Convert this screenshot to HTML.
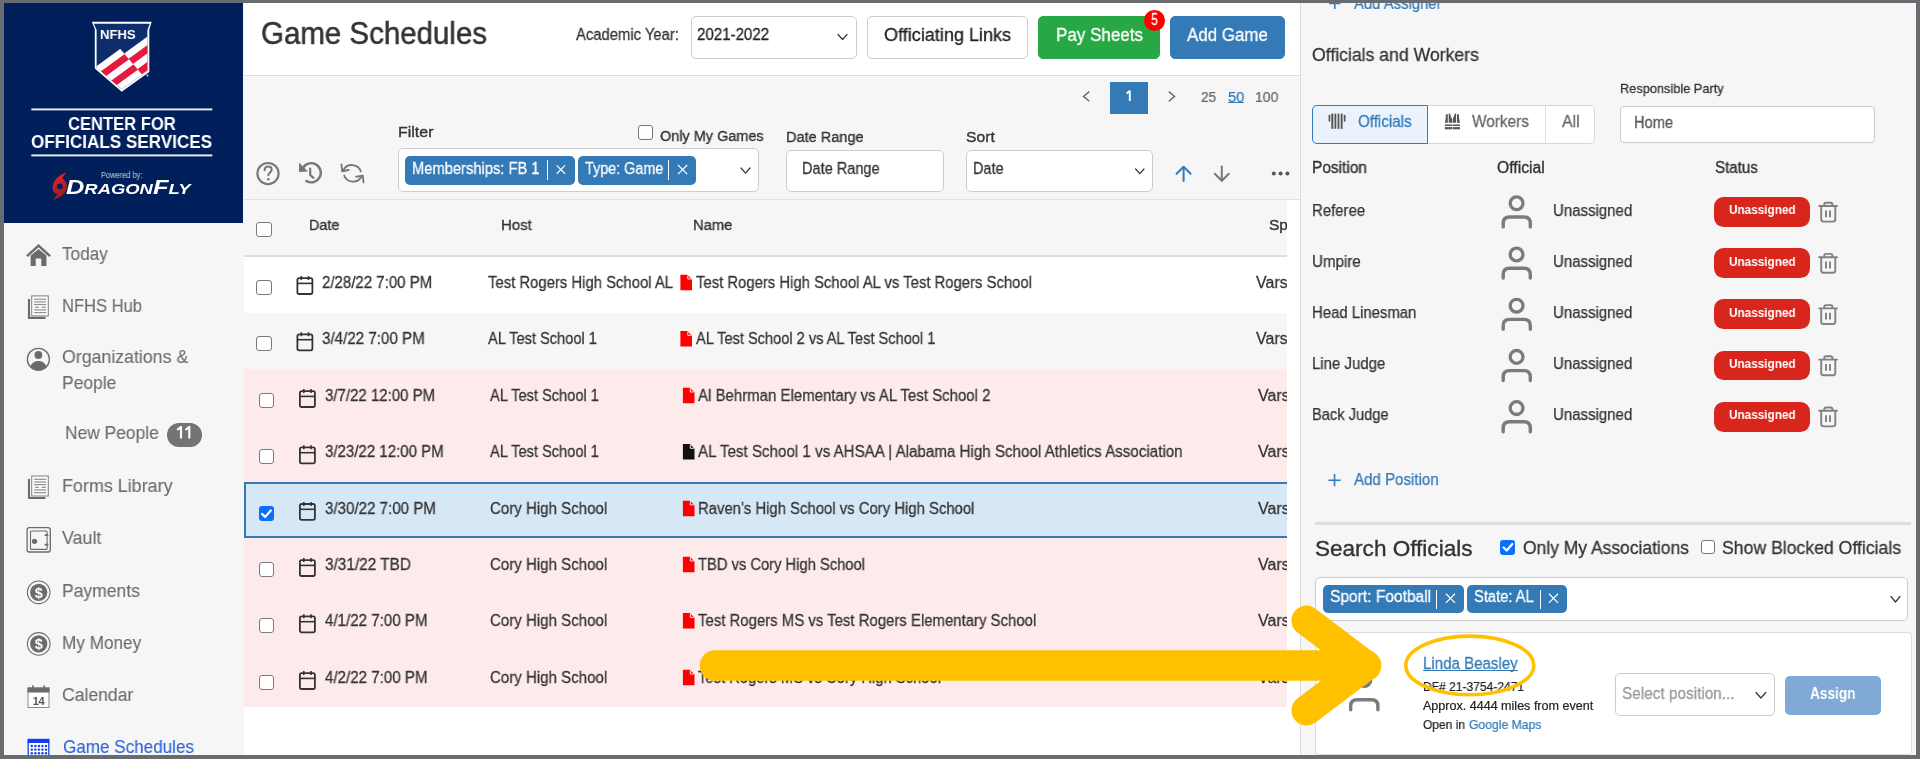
<!DOCTYPE html><html><head><meta charset="utf-8"><style>
*{box-sizing:border-box;margin:0;padding:0}
html,body{width:1920px;height:760px;overflow:hidden;background:#fff}
body{position:relative;font-family:"Liberation Sans",sans-serif;color:#333}
.t{position:absolute;white-space:nowrap;line-height:1;will-change:transform}
.a{position:absolute}
svg{position:absolute;overflow:visible}
</style></head><body>
<div class="a" style="left:0;top:0;width:1920px;height:760px;background:#fff"></div>
<div class="a" style="left:4px;top:3px;width:240px;height:752px;background:#f6f6f6"></div>
<div class="a" style="left:4px;top:3px;width:239px;height:219.5px;background:#001f5b"></div>
<div class="a" style="left:244px;top:3px;width:1056px;height:72px;background:#fff"></div>
<div class="a" style="left:244px;top:75px;width:1056px;height:125px;background:#f6f6f6;border-top:1px solid #ddd"></div>
<div class="a" style="left:244px;top:199px;width:1043px;height:58px;background:#f6f6f6;border-top:1px solid #e3e3e3;border-bottom:2px solid #ddd"></div>
<div class="a" style="left:1287px;top:200px;width:13px;height:555px;background:#fff"></div>
<div class="a" style="left:1300px;top:3px;width:616px;height:752px;background:#f6f6f6;border-left:1px solid #ddd"></div>
<svg width="1920" height="760" style="left:0;top:0">
<defs>
<clipPath id="shin"><path d="M93.8,23.8 L149.8,23.8 L147.4,30 L147.4,71.2 L121.7,89.3 L96.6,67.4 L96.6,30 Z"/></clipPath>
<clipPath id="gL"><path d="M119.9,48.4 L142.2,74.5 L160,95 L60,95 L60,0 L80,0 Z"/></clipPath>
<clipPath id="gR"><path d="M119.9,48.4 L142.2,74.5 L160,95 L170,95 L170,0 L80,0 Z"/></clipPath>
</defs>
<path d="M91.8,21.8 L151.7,21.8 L149.3,29.5 L149.3,72 L121.7,91.8 L94.8,68.5 L94.8,29 Z" fill="#fff"/>
<path d="M93.8,23.8 L149.8,23.8 L147.4,30 L147.4,71.2 L121.7,89.3 L96.6,67.4 L96.6,30 Z" fill="#0d2d6c"/>
<g clip-path="url(#shin)">
 <g clip-path="url(#gL)"><g transform="rotate(-36)">
  <rect x="-300" y="110.2" width="600" height="60" fill="#fff"/>
  <rect x="-300" y="117" width="600" height="6.8" fill="#e31b3f"/>
  <rect x="-300" y="130.6" width="600" height="6.8" fill="#e31b3f"/>
 </g></g>
 <g clip-path="url(#gR)"><g transform="rotate(-36)">
  <rect x="-300" y="116.3" width="600" height="60" fill="#fff"/>
  <rect x="-300" y="123.1" width="600" height="6.8" fill="#e31b3f"/>
  <rect x="-300" y="136.7" width="600" height="6.8" fill="#e31b3f"/>
 </g></g>
</g>
<circle cx="147.5" cy="75.5" r="1" fill="#cfd6e6"/>
<rect x="31.3" y="108.4" width="181" height="2" fill="#e6e9f0"/>
<rect x="31.3" y="154.4" width="181" height="2" fill="#e6e9f0"/>
<defs><linearGradient id="swg" x1="0" y1="0" x2="0.4" y2="1"><stop offset="0" stop-color="#f0262a"/><stop offset="1" stop-color="#9c1a1f"/></linearGradient></defs>
<path d="M67.4,172.3 C61,174 54,178.5 52.8,186 C52,191 54.5,194 57.5,193.8 C56.5,196 54.5,198.5 52.5,199.8 C59,198.5 66.5,194 66.9,187 C67.1,182.5 64.8,180 62.4,178.2 C63.5,175.5 65.5,173.5 67.4,172.3 Z" fill="url(#swg)"/>
<circle cx="59.85" cy="186.6" r="3" fill="#001f5b"/>
</svg>
<div class="t " style="left:100.00px;top:27.67px;font-size:13.5px;letter-spacing:0.000px;color:#fff;font-weight:700;transform:scaleX(0.9701);transform-origin:0.00px 0;">NFHS</div>
<div class="t " style="left:67.80px;top:114.82px;font-size:18.4px;letter-spacing:0.000px;color:#fff;font-weight:700;transform:scaleX(0.9013);transform-origin:0.00px 0;">CENTER FOR</div>
<div class="t " style="left:31.30px;top:133.26px;font-size:18px;letter-spacing:0.000px;color:#fff;font-weight:700;transform:scaleX(0.9491);transform-origin:0.00px 0;">OFFICIALS SERVICES</div>
<div class="t " style="left:100.80px;top:170.65px;font-size:8.8px;letter-spacing:0.000px;color:#aeb6c8;font-weight:400;transform:scaleX(0.8487);transform-origin:0.00px 0;-webkit-text-stroke:0.14px #aeb6c8;">Powered by:</div>
<div class="t" style="left:66px;top:178.6px;font-weight:700;font-style:italic;color:#fff;font-size:14.5px;line-height:16px;height:16px;transform:scaleX(1.27);transform-origin:0 0"><span style="font-size:20px">D</span>RAGON<span style="font-size:20px">F</span>LY</div>
<div class="t " style="left:62.40px;top:244.96px;font-size:18.6px;letter-spacing:0.000px;color:#6c6c6c;font-weight:400;transform:scaleX(0.9234);transform-origin:0.00px 0;-webkit-text-stroke:0.12px #6c6c6c">Today</div>
<div class="t " style="left:62.40px;top:296.96px;font-size:18.6px;letter-spacing:0.000px;color:#6c6c6c;font-weight:400;transform:scaleX(0.8899);transform-origin:0.00px 0;-webkit-text-stroke:0.12px #6c6c6c">NFHS Hub</div>
<div class="t " style="left:62.40px;top:476.96px;font-size:18.6px;letter-spacing:0.000px;color:#6c6c6c;font-weight:400;transform:scaleX(0.9634);transform-origin:0.00px 0;-webkit-text-stroke:0.12px #6c6c6c">Forms Library</div>
<div class="t " style="left:62.40px;top:529.26px;font-size:18.6px;letter-spacing:0.000px;color:#6c6c6c;font-weight:400;transform:scaleX(0.9610);transform-origin:0.00px 0;-webkit-text-stroke:0.12px #6c6c6c">Vault</div>
<div class="t " style="left:62.40px;top:581.76px;font-size:18.6px;letter-spacing:0.000px;color:#6c6c6c;font-weight:400;transform:scaleX(0.9420);transform-origin:0.00px 0;-webkit-text-stroke:0.12px #6c6c6c">Payments</div>
<div class="t " style="left:62.40px;top:634.06px;font-size:18.6px;letter-spacing:0.000px;color:#6c6c6c;font-weight:400;transform:scaleX(0.9231);transform-origin:0.00px 0;-webkit-text-stroke:0.12px #6c6c6c">My Money</div>
<div class="t " style="left:62.40px;top:685.96px;font-size:18.6px;letter-spacing:0.000px;color:#6c6c6c;font-weight:400;transform:scaleX(0.9444);transform-origin:0.00px 0;-webkit-text-stroke:0.12px #6c6c6c">Calendar</div>
<div class="t " style="left:62.40px;top:348.06px;font-size:18.6px;letter-spacing:0.000px;color:#6c6c6c;font-weight:400;transform:scaleX(0.9539);transform-origin:0.00px 0;-webkit-text-stroke:0.12px #6c6c6c">Organizations &amp;</div>
<div class="t " style="left:62.40px;top:373.66px;font-size:18.6px;letter-spacing:0.000px;color:#6c6c6c;font-weight:400;transform:scaleX(0.9396);transform-origin:0.00px 0;-webkit-text-stroke:0.12px #6c6c6c">People</div>
<div class="t " style="left:65.20px;top:424.46px;font-size:18.6px;letter-spacing:0.000px;color:#6c6c6c;font-weight:400;transform:scaleX(0.9352);transform-origin:0.00px 0;-webkit-text-stroke:0.12px #6c6c6c">New People</div>
<div class="a" style="left:167.3px;top:423.4px;width:34.3px;height:23.4px;border-radius:12px;background:#747474"></div>
<svg width="1920" height="760" style="left:0;top:0"><path d="M177.2,430 L181,426.9 V438.4 M185.5,430 L189.3,426.9 V438.4" fill="none" stroke="#fff" stroke-width="2.1" stroke-linejoin="round"/></svg>
<div class="t " style="left:62.50px;top:737.96px;font-size:18.6px;letter-spacing:0.000px;color:#2d63d8;font-weight:400;transform:scaleX(0.9187);transform-origin:0.00px 0;-webkit-text-stroke:0.12px #2d63d8">Game Schedules</div>
<svg width="1920" height="760" style="left:0;top:0">
<!-- home -->
<path d="M27.8,255.4 L38.5,245.6 L49.2,255.4" fill="none" stroke="#6b6b6b" stroke-width="2.4" stroke-linecap="square"/>
<path d="M30.6,255.6 L38.5,249 L46.4,255.6 L46.4,266 L41.3,266 L41.3,258.6 L35.7,258.6 L35.7,266 L30.6,266 Z" fill="#6b6b6b"/>

<svg width="1920" height="760" style="left:0;top:0"><path d="M29,299.0 L29,317.9 L45.5,317.9" fill="none" stroke="#6b6b6b" stroke-width="2.1"/><rect x="31.7" y="295.9" width="16.6" height="20" fill="#fdfdfd" stroke="#8a8a8a" stroke-width="1.1"/><rect x="34.1" y="298.59999999999997" width="12.1" height="1.2" fill="#8f8f8f"/><rect x="34.1" y="301.29999999999995" width="12.1" height="1.2" fill="#8f8f8f"/><rect x="34.1" y="303.9" width="12.1" height="1.2" fill="#8f8f8f"/><rect x="35" y="306.59999999999997" width="4" height="1.2" fill="#8f8f8f"/><rect x="41.5" y="306.59999999999997" width="4.5" height="1.2" fill="#8f8f8f"/><rect x="34.1" y="309.29999999999995" width="12.1" height="1.2" fill="#8f8f8f"/><rect x="34.1" y="311.99999999999994" width="12.1" height="1.2" fill="#8f8f8f"/><path d="M29,479.1 L29,498.0 L45.5,498.0" fill="none" stroke="#6b6b6b" stroke-width="2.1"/><rect x="31.7" y="476.0" width="16.6" height="20" fill="#fdfdfd" stroke="#8a8a8a" stroke-width="1.1"/><rect x="34.1" y="478.7" width="12.1" height="1.2" fill="#8f8f8f"/><rect x="34.1" y="481.4" width="12.1" height="1.2" fill="#8f8f8f"/><rect x="34.1" y="484.0" width="12.1" height="1.2" fill="#8f8f8f"/><rect x="35" y="486.7" width="4" height="1.2" fill="#8f8f8f"/><rect x="41.5" y="486.7" width="4.5" height="1.2" fill="#8f8f8f"/><rect x="34.1" y="489.4" width="12.1" height="1.2" fill="#8f8f8f"/><rect x="34.1" y="492.09999999999997" width="12.1" height="1.2" fill="#8f8f8f"/></svg>
<svg width="1920" height="760" style="left:0;top:0">
<!-- org -->
<circle cx="38.4" cy="359.3" r="11" fill="none" stroke="#6b6b6b" stroke-width="1.3"/>
<circle cx="38.4" cy="355" r="3.9" fill="#6b6b6b"/>
<path d="M30.5,367.2 C31.5,362.5 35,361 38.4,361 C41.8,361 45.3,362.5 46.3,367.2 C44,369.3 41.5,370.2 38.4,370.2 C35.3,370.2 32.8,369.3 30.5,367.2 Z" fill="#6b6b6b"/>
<!-- vault -->
<rect x="27.1" y="527.7" width="23.2" height="24.3" rx="2.2" fill="none" stroke="#6b6b6b" stroke-width="1.3"/>
<rect x="30.5" y="531" width="16.6" height="18.4" rx="1" fill="none" stroke="#6b6b6b" stroke-width="1.1"/>
<circle cx="34.5" cy="541.3" r="2.6" fill="#6b6b6b"/>
<rect x="44.5" y="534.3" width="4" height="1.8" rx="0.9" fill="#6b6b6b"/>
<rect x="44.5" y="543.8" width="4" height="1.8" rx="0.9" fill="#6b6b6b"/>

<circle cx="38.7" cy="592.3" r="11.3" fill="none" stroke="#6b6b6b" stroke-width="1.1"/>
<circle cx="38.7" cy="592.3" r="8.6" fill="#6b6b6b"/>
<text x="38.7" y="597.5" text-anchor="middle" font-family="Liberation Sans" font-weight="700" font-size="14.5" fill="#fff">$</text>
<circle cx="38.7" cy="643.9" r="11.3" fill="none" stroke="#6b6b6b" stroke-width="1.1"/>
<circle cx="38.7" cy="643.9" r="8.6" fill="#6b6b6b"/>
<text x="38.7" y="649.1" text-anchor="middle" font-family="Liberation Sans" font-weight="700" font-size="14.5" fill="#fff">$</text>
<!-- calendar 14 -->
<rect x="28" y="688" width="21" height="19.5" fill="#fff" stroke="#8a8a8a" stroke-width="1"/>
<rect x="27.5" y="687.5" width="22" height="5" fill="#6b6b6b"/>
<rect x="32" y="685.4" width="1.6" height="3.5" fill="#6b6b6b"/><rect x="43.4" y="685.4" width="1.6" height="3.5" fill="#6b6b6b"/>
<text x="38.5" y="705.3" text-anchor="middle" font-family="Liberation Sans" font-weight="700" font-size="11" fill="#555" letter-spacing="-0.3">14</text>
<!-- game schedules blue -->
<rect x="28.2" y="742" width="20.6" height="16" fill="#fff" stroke="#1144ee" stroke-width="1.3"/>
<rect x="27.5" y="738.8" width="22" height="4.2" fill="#0d3cf2"/>
<circle cx="31.80" cy="746.00" r="1.2" fill="#0d3cf2"/><circle cx="31.80" cy="749.60" r="1.2" fill="#0d3cf2"/><circle cx="31.80" cy="753.20" r="1.2" fill="#0d3cf2"/><circle cx="35.35" cy="746.00" r="1.2" fill="#0d3cf2"/><circle cx="35.35" cy="749.60" r="1.2" fill="#0d3cf2"/><circle cx="35.35" cy="753.20" r="1.2" fill="#0d3cf2"/><circle cx="38.90" cy="746.00" r="1.2" fill="#0d3cf2"/><circle cx="38.90" cy="749.60" r="1.2" fill="#0d3cf2"/><circle cx="38.90" cy="753.20" r="1.2" fill="#0d3cf2"/><circle cx="42.45" cy="746.00" r="1.2" fill="#0d3cf2"/><circle cx="42.45" cy="749.60" r="1.2" fill="#0d3cf2"/><circle cx="42.45" cy="753.20" r="1.2" fill="#0d3cf2"/><circle cx="46.00" cy="746.00" r="1.2" fill="#0d3cf2"/><circle cx="46.00" cy="749.60" r="1.2" fill="#0d3cf2"/><circle cx="46.00" cy="753.20" r="1.2" fill="#0d3cf2"/></svg>
<div class="t " style="left:261.00px;top:17.21px;font-size:32px;letter-spacing:0.000px;color:#333;font-weight:400;transform:scaleX(0.9206);transform-origin:0.00px 0;-webkit-text-stroke:0.51px #333;">Game Schedules</div>
<div class="t " style="left:575.80px;top:27.36px;font-size:16px;letter-spacing:0.000px;color:#333;font-weight:400;transform:scaleX(0.9254);transform-origin:0.00px 0;-webkit-text-stroke:0.26px #333;">Academic Year:</div>
<div class="a" style="left:691px;top:16px;width:165.5px;height:42.5px;background:#fff;border:1px solid #ccc;border-radius:5px;"></div>
<div class="t " style="left:696.90px;top:27.36px;font-size:16px;letter-spacing:0.000px;color:#222;font-weight:400;transform:scaleX(0.9425);transform-origin:0.00px 0;-webkit-text-stroke:0.26px #222;">2021-2022</div>
<svg width="1920" height="760" style="left:0;top:0"><path d="M838,34.5 L842.5,39.5 L847,34.5" fill="none" stroke="#333" stroke-width="1.2" stroke-linecap="round" stroke-linejoin="round"/></svg>
<div class="a" style="left:867px;top:16px;width:161px;height:43px;background:#fff;border:1px solid #ccc;border-radius:5px;"></div>
<div class="t " style="left:884.00px;top:26.16px;font-size:18.6px;letter-spacing:0.000px;color:#222;font-weight:400;transform:scaleX(0.9710);transform-origin:0.00px 0;-webkit-text-stroke:0.30px #222;">Officiating Links</div>
<div class="a" style="left:1038.3px;top:16px;width:121.40000000000009px;height:43px;background:#28a745;border:1px solid #28a745;border-radius:5px;"></div>
<div class="t " style="left:1056.00px;top:26.16px;font-size:18.6px;letter-spacing:0.000px;color:#fff;font-weight:400;transform:scaleX(0.9148);transform-origin:0.00px 0;-webkit-text-stroke:0.30px #fff;">Pay Sheets</div>
<div class="a" style="left:1170px;top:16px;width:115px;height:43px;background:#337ab7;border:1px solid #337ab7;border-radius:5px;"></div>
<div class="t " style="left:1186.50px;top:26.16px;font-size:18.6px;letter-spacing:0.000px;color:#fff;font-weight:400;transform:scaleX(0.9100);transform-origin:0.00px 0;-webkit-text-stroke:0.30px #fff;">Add Game</div>
<div class="a" style="left:1144.4px;top:10.3px;width:20.5px;height:20.5px;border-radius:50%;background:#f00"></div>
<div class="t " style="left:1151.20px;top:12.46px;font-size:16px;letter-spacing:0.000px;color:#fff;font-weight:400;transform:scaleX(0.7753);transform-origin:0.00px 0;-webkit-text-stroke:0.26px #fff;">5</div>
<svg width="1920" height="760" style="left:0;top:0">
<circle cx="268" cy="173.6" r="10.6" fill="none" stroke="#777" stroke-width="2.1"/>
<path d="M264.6,170.2 C264.6,167.8 266.2,166.4 268.2,166.4 C270.2,166.4 271.7,167.8 271.7,169.8 C271.7,172.3 268.3,172.6 268.3,175.2" fill="none" stroke="#777" stroke-width="2" stroke-linecap="round"/>
<circle cx="268.3" cy="179.2" r="1.25" fill="#777"/>
<path d="M302.2,169.5 A9.6,9.6 0 1 1 305.5,180.5" fill="none" stroke="#777" stroke-width="2.4"/>
<path d="M299,162.5 L299,172 L308,171.5 Z" fill="#777"/>
<path d="M310.2,168.5 L310.2,175 L313.5,177.8" fill="none" stroke="#777" stroke-width="2.2" stroke-linecap="round"/>
<path d="M343.5,170 A9.5,9.5 0 0 1 361,172" fill="none" stroke="#777" stroke-width="1.9"/>
<path d="M361.5,176.5 A9.5,9.5 0 0 1 344,175" fill="none" stroke="#777" stroke-width="1.9"/>
<path d="M341.5,164.5 L342.2,171.2 L348.7,170" fill="none" stroke="#777" stroke-width="1.9" stroke-linecap="round" stroke-linejoin="round"/>
<path d="M363.5,182.3 L362.8,175.6 L356.3,176.8" fill="none" stroke="#777" stroke-width="1.9" stroke-linecap="round" stroke-linejoin="round"/>
</svg>
<div class="t " style="left:398.40px;top:123.88px;font-size:15.5px;letter-spacing:0.000px;color:#333;font-weight:400;transform:scaleX(1.0291);transform-origin:0.00px 0;-webkit-text-stroke:0.35px #333">Filter</div>
<div class="a" style="left:397.6px;top:148.3px;width:361.4px;height:44.099999999999994px;background:#fff;border:1px solid #ccc;border-radius:5px;"></div>
<div class="a" style="left:404.8px;top:155.8px;width:169.8px;height:29.099999999999994px;background:#337ab7;border-radius:5px"></div>
<div class="t " style="left:412.40px;top:160.86px;font-size:16px;letter-spacing:0.000px;color:#fff;font-weight:400;transform:scaleX(0.9193);transform-origin:0.00px 0;-webkit-text-stroke:0.26px #fff;">Memberships: FB 1</div>
<div class="a" style="left:547px;top:160.29999999999998px;width:1px;height:19.6px;background:#fff"></div>
<svg width="1920" height="760" style="left:0;top:0"><path d="M556.7,165.45000000000002 L565.0,173.74999999999997 M565.0,165.45000000000002 L556.7,173.74999999999997" stroke="#fff" stroke-width="1.2"/></svg>
<div class="a" style="left:577.6px;top:155.8px;width:118.60000000000002px;height:29.099999999999994px;background:#337ab7;border-radius:5px"></div>
<div class="t " style="left:584.50px;top:160.86px;font-size:16px;letter-spacing:0.000px;color:#fff;font-weight:400;transform:scaleX(0.8990);transform-origin:0.00px 0;-webkit-text-stroke:0.26px #fff;">Type: Game</div>
<div class="a" style="left:668px;top:160.29999999999998px;width:1px;height:19.6px;background:#fff"></div>
<svg width="1920" height="760" style="left:0;top:0"><path d="M678.0,164.99999999999997 L687.2,174.20000000000002 M687.2,164.99999999999997 L678.0,174.20000000000002" stroke="#fff" stroke-width="1.2"/></svg>
<svg width="1920" height="760" style="left:0;top:0"><path d="M741,168 L745.5,173.2 L750,168" fill="none" stroke="#333" stroke-width="1.2" stroke-linecap="round" stroke-linejoin="round"/></svg>
<div class="a" style="left:638px;top:125px;width:14.799999999999955px;height:14.599999999999994px;background:#fff;border:1px solid #767676;border-radius:3px;border-width:1.2px"></div>
<div class="t " style="left:660.40px;top:127.78px;font-size:15.5px;letter-spacing:0.000px;color:#333;font-weight:400;transform:scaleX(0.9325);transform-origin:0.00px 0;-webkit-text-stroke:0.35px #333">Only My Games</div>
<div class="t " style="left:786.00px;top:129.38px;font-size:15.5px;letter-spacing:0.000px;color:#333;font-weight:400;transform:scaleX(0.9383);transform-origin:0.00px 0;-webkit-text-stroke:0.35px #333">Date Range</div>
<div class="a" style="left:785.6px;top:149.5px;width:158.89999999999998px;height:42.69999999999999px;background:#fff;border:1px solid #ccc;border-radius:5px;"></div>
<div class="t " style="left:802.40px;top:161.16px;font-size:16px;letter-spacing:0.000px;color:#333;font-weight:400;transform:scaleX(0.9087);transform-origin:0.00px 0;-webkit-text-stroke:0.26px #333;">Date Range</div>
<div class="t " style="left:966.20px;top:129.38px;font-size:15.5px;letter-spacing:0.000px;color:#333;font-weight:400;transform:scaleX(1.0106);transform-origin:0.00px 0;-webkit-text-stroke:0.35px #333">Sort</div>
<div class="a" style="left:966.2px;top:149.5px;width:187.29999999999995px;height:42.69999999999999px;background:#fff;border:1px solid #ccc;border-radius:5px;"></div>
<div class="t " style="left:972.90px;top:161.16px;font-size:16px;letter-spacing:0.000px;color:#333;font-weight:400;transform:scaleX(0.9024);transform-origin:0.00px 0;-webkit-text-stroke:0.26px #333;">Date</div>
<svg width="1920" height="760" style="left:0;top:0"><path d="M1135.6,169 L1139.8,173.7 L1144,169" fill="none" stroke="#333" stroke-width="1.2" stroke-linecap="round" stroke-linejoin="round"/></svg>
<svg width="1920" height="760" style="left:0;top:0"><path d="M1089.3,91.6 L1083.5,96.4 L1089.3,101.2" fill="none" stroke="#666" stroke-width="1.4"/><path d="M1168.8,91.6 L1174.6,96.4 L1168.8,101.2" fill="none" stroke="#666" stroke-width="1.4"/></svg>
<div class="a" style="left:1109.7px;top:82.4px;width:38.8px;height:32.1px;background:#337ab7"></div>
<svg width="1920" height="760" style="left:0;top:0"><path d="M1126.6,93.4 L1129.8,91 V101" fill="none" stroke="#fff" stroke-width="1.9" stroke-linejoin="round"/></svg>
<div class="t " style="left:1201.40px;top:89.00px;font-size:15px;letter-spacing:0.000px;color:#666;font-weight:400;transform:scaleX(0.9102);transform-origin:0.00px 0;-webkit-text-stroke:0.24px #666;">25</div>
<div class="t " style="left:1227.80px;top:89.00px;font-size:15px;letter-spacing:0.000px;color:#337ab7;font-weight:400;transform:scaleX(0.9820);transform-origin:0.00px 0;-webkit-text-stroke:0.24px #337ab7;">50</div>
<div class="a" style="left:1227.8px;top:101.8px;width:16.6px;height:1px;background:#337ab7"></div>
<div class="t " style="left:1255.40px;top:89.00px;font-size:15px;letter-spacing:0.000px;color:#666;font-weight:400;transform:scaleX(0.9320);transform-origin:0.00px 0;-webkit-text-stroke:0.24px #666;">100</div>
<svg width="1920" height="760" style="left:0;top:0">
<path d="M1183.6,167 L1183.6,181" stroke="#337ab7" stroke-width="2" stroke-linecap="round"/>
<path d="M1176.6,173.8 L1183.6,166.8 L1190.6,173.8" fill="none" stroke="#337ab7" stroke-width="2" stroke-linecap="round" stroke-linejoin="round"/>
<path d="M1221.8,166.5 L1221.8,180.5" stroke="#777" stroke-width="2" stroke-linecap="round"/>
<path d="M1214.8,173.7 L1221.8,180.7 L1228.8,173.7" fill="none" stroke="#777" stroke-width="2" stroke-linecap="round" stroke-linejoin="round"/>
<circle cx="1273.8" cy="173.5" r="2" fill="#555"/><circle cx="1280.6" cy="173.5" r="2" fill="#555"/><circle cx="1287.4" cy="173.5" r="2" fill="#555"/>
</svg>
<div class="a" style="left:244px;top:257px;width:1043px;height:56px;background:#fff"></div>
<div class="a" style="left:244px;top:313px;width:1043px;height:56px;background:#f6f6f6"></div>
<div class="a" style="left:244px;top:369px;width:1043px;height:57px;background:#fdebeb"></div>
<div class="a" style="left:244px;top:426px;width:1043px;height:56px;background:#fdebeb"></div>
<div class="a" style="left:244px;top:482px;width:1043px;height:56px;background:#d6e8f6;border:2px solid #337ab7;border-right:none"></div>
<div class="a" style="left:244px;top:538px;width:1043px;height:57px;background:#fdebeb"></div>
<div class="a" style="left:244px;top:595px;width:1043px;height:56px;background:#fdebeb"></div>
<div class="a" style="left:244px;top:651px;width:1043px;height:56px;background:#fdebeb"></div>
<div class="a" style="left:256px;top:280.0px;width:15.5px;height:15.2px;background:#fff;border:1.3px solid #7a7a7a;border-radius:3px"></div>
<svg width="1920" height="760" style="left:0;top:0"><rect x="297.4" y="278.1" width="15" height="15.9" rx="1.8" fill="none" stroke="#333" stroke-width="1.8"/><path d="M297.4,283.40000000000003 H312.4" stroke="#333" stroke-width="1.6"/><path d="M301.3,276.0 V280.0 M308.5,276.0 V280.0" stroke="#333" stroke-width="1.6"/></svg>
<div class="t " style="left:322.30px;top:274.96px;font-size:16px;letter-spacing:0.000px;color:#333;font-weight:400;transform:scaleX(0.9387);transform-origin:0.00px 0;-webkit-text-stroke:0.26px #333;">2/28/22 7:00 PM</div>
<div class="t " style="left:487.50px;top:274.96px;font-size:16px;letter-spacing:0.000px;color:#333;font-weight:400;transform:scaleX(0.9287);transform-origin:0.00px 0;-webkit-text-stroke:0.26px #333;">Test Rogers High School AL</div>
<svg width="1920" height="760" style="left:0;top:0"><path d="M680.4,274.8 H687.4 L692.0,279.40000000000003 V290.3 H680.4 Z" fill="#f00"/><path d="M687.8,275.40000000000003 V279.0 H691.4" fill="none" stroke="#fff" stroke-width="0.9"/></svg>
<div class="t " style="left:695.50px;top:274.96px;font-size:16px;letter-spacing:0.000px;color:#333;font-weight:400;transform:scaleX(0.9282);transform-origin:0.00px 0;-webkit-text-stroke:0.26px #333;">Test Rogers High School AL vs Test Rogers School</div>
<div class="t " style="left:1255.70px;top:274.96px;font-size:16px;letter-spacing:0.000px;color:#333;font-weight:400;transform:scaleX(0.9937);transform-origin:0.00px 0;-webkit-text-stroke:0.26px #333;">Vars</div>
<div class="a" style="left:256px;top:336.3px;width:15.5px;height:15.2px;background:#fff;border:1.3px solid #7a7a7a;border-radius:3px"></div>
<svg width="1920" height="760" style="left:0;top:0"><rect x="297.4" y="334.40000000000003" width="15" height="15.9" rx="1.8" fill="none" stroke="#333" stroke-width="1.8"/><path d="M297.4,339.70000000000005 H312.4" stroke="#333" stroke-width="1.6"/><path d="M301.3,332.3 V336.3 M308.5,332.3 V336.3" stroke="#333" stroke-width="1.6"/></svg>
<div class="t " style="left:322.30px;top:331.26px;font-size:16px;letter-spacing:0.000px;color:#333;font-weight:400;transform:scaleX(0.9465);transform-origin:0.00px 0;-webkit-text-stroke:0.26px #333;">3/4/22 7:00 PM</div>
<div class="t " style="left:487.50px;top:331.26px;font-size:16px;letter-spacing:0.000px;color:#333;font-weight:400;transform:scaleX(0.9136);transform-origin:0.00px 0;-webkit-text-stroke:0.26px #333;">AL Test School 1</div>
<svg width="1920" height="760" style="left:0;top:0"><path d="M680.4,331.1 H687.4 L692.0,335.70000000000005 V346.6 H680.4 Z" fill="#f00"/><path d="M687.8,331.70000000000005 V335.3 H691.4" fill="none" stroke="#fff" stroke-width="0.9"/></svg>
<div class="t " style="left:695.50px;top:331.26px;font-size:16px;letter-spacing:0.000px;color:#333;font-weight:400;transform:scaleX(0.9123);transform-origin:0.00px 0;-webkit-text-stroke:0.26px #333;">AL Test School 2 vs AL Test School 1</div>
<div class="t " style="left:1255.70px;top:331.26px;font-size:16px;letter-spacing:0.000px;color:#333;font-weight:400;transform:scaleX(0.9937);transform-origin:0.00px 0;-webkit-text-stroke:0.26px #333;">Vars</div>
<div class="a" style="left:258.5px;top:393.0px;width:15.5px;height:15.2px;background:#fff;border:1.3px solid #7a7a7a;border-radius:3px"></div>
<svg width="1920" height="760" style="left:0;top:0"><rect x="299.9" y="391.1" width="15" height="15.9" rx="1.8" fill="none" stroke="#333" stroke-width="1.8"/><path d="M299.9,396.40000000000003 H314.9" stroke="#333" stroke-width="1.6"/><path d="M303.8,389.0 V393.0 M311.0,389.0 V393.0" stroke="#333" stroke-width="1.6"/></svg>
<div class="t " style="left:324.80px;top:387.96px;font-size:16px;letter-spacing:0.000px;color:#333;font-weight:400;transform:scaleX(0.9378);transform-origin:0.00px 0;-webkit-text-stroke:0.26px #333;">3/7/22 12:00 PM</div>
<div class="t " style="left:490.00px;top:387.96px;font-size:16px;letter-spacing:0.000px;color:#333;font-weight:400;transform:scaleX(0.9136);transform-origin:0.00px 0;-webkit-text-stroke:0.26px #333;">AL Test School 1</div>
<svg width="1920" height="760" style="left:0;top:0"><path d="M682.9,387.8 H689.9 L694.5,392.40000000000003 V403.3 H682.9 Z" fill="#f00"/><path d="M690.3,388.40000000000003 V392.0 H693.9" fill="none" stroke="#fff" stroke-width="0.9"/></svg>
<div class="t " style="left:698.00px;top:387.96px;font-size:16px;letter-spacing:0.000px;color:#333;font-weight:400;transform:scaleX(0.9369);transform-origin:0.00px 0;-webkit-text-stroke:0.26px #333;">Al Behrman Elementary vs AL Test School 2</div>
<div class="t " style="left:1258.20px;top:387.96px;font-size:16px;letter-spacing:0.000px;color:#333;font-weight:400;transform:scaleX(0.9937);transform-origin:0.00px 0;-webkit-text-stroke:0.26px #333;">Vars</div>
<div class="a" style="left:258.5px;top:449.3px;width:15.5px;height:15.2px;background:#fff;border:1.3px solid #7a7a7a;border-radius:3px"></div>
<svg width="1920" height="760" style="left:0;top:0"><rect x="299.9" y="447.40000000000003" width="15" height="15.9" rx="1.8" fill="none" stroke="#333" stroke-width="1.8"/><path d="M299.9,452.70000000000005 H314.9" stroke="#333" stroke-width="1.6"/><path d="M303.8,445.3 V449.3 M311.0,445.3 V449.3" stroke="#333" stroke-width="1.6"/></svg>
<div class="t " style="left:324.80px;top:444.26px;font-size:16px;letter-spacing:0.000px;color:#333;font-weight:400;transform:scaleX(0.9398);transform-origin:0.00px 0;-webkit-text-stroke:0.26px #333;">3/23/22 12:00 PM</div>
<div class="t " style="left:490.00px;top:444.26px;font-size:16px;letter-spacing:0.000px;color:#333;font-weight:400;transform:scaleX(0.9136);transform-origin:0.00px 0;-webkit-text-stroke:0.26px #333;">AL Test School 1</div>
<svg width="1920" height="760" style="left:0;top:0"><path d="M682.9,444.1 H689.9 L694.5,448.70000000000005 V459.6 H682.9 Z" fill="#111"/><path d="M690.3,444.70000000000005 V448.3 H693.9" fill="none" stroke="#fff" stroke-width="0.9"/></svg>
<div class="t " style="left:698.00px;top:444.26px;font-size:16px;letter-spacing:0.000px;color:#333;font-weight:400;transform:scaleX(0.9465);transform-origin:0.00px 0;-webkit-text-stroke:0.26px #333;">AL Test School 1 vs AHSAA | Alabama High School Athletics Association</div>
<div class="t " style="left:1258.20px;top:444.26px;font-size:16px;letter-spacing:0.000px;color:#333;font-weight:400;transform:scaleX(0.9937);transform-origin:0.00px 0;-webkit-text-stroke:0.26px #333;">Vars</div>
<div class="a" style="left:258.5px;top:505.90000000000003px;width:15.5px;height:15.5px;background:#0d6efd;border-radius:3px"></div>
<svg width="1920" height="760" style="left:0;top:0"><path d="M262.0,513.9000000000001 L265.1,516.9000000000001 L270.8,510.40000000000003" fill="none" stroke="#fff" stroke-width="2.2" stroke-linecap="round" stroke-linejoin="round"/></svg>
<svg width="1920" height="760" style="left:0;top:0"><rect x="299.9" y="504.00000000000006" width="15" height="15.9" rx="1.8" fill="none" stroke="#333" stroke-width="1.8"/><path d="M299.9,509.30000000000007 H314.9" stroke="#333" stroke-width="1.6"/><path d="M303.8,501.90000000000003 V505.90000000000003 M311.0,501.90000000000003 V505.90000000000003" stroke="#333" stroke-width="1.6"/></svg>
<div class="t " style="left:324.80px;top:500.86px;font-size:16px;letter-spacing:0.000px;color:#333;font-weight:400;transform:scaleX(0.9446);transform-origin:0.00px 0;-webkit-text-stroke:0.26px #333;">3/30/22 7:00 PM</div>
<div class="t " style="left:490.00px;top:500.86px;font-size:16px;letter-spacing:0.000px;color:#333;font-weight:400;transform:scaleX(0.9414);transform-origin:0.00px 0;-webkit-text-stroke:0.26px #333;">Cory High School</div>
<svg width="1920" height="760" style="left:0;top:0"><path d="M682.9,500.70000000000005 H689.9 L694.5,505.30000000000007 V516.2 H682.9 Z" fill="#f00"/><path d="M690.3,501.30000000000007 V504.90000000000003 H693.9" fill="none" stroke="#fff" stroke-width="0.9"/></svg>
<div class="t " style="left:698.00px;top:500.86px;font-size:16px;letter-spacing:0.000px;color:#333;font-weight:400;transform:scaleX(0.9294);transform-origin:0.00px 0;-webkit-text-stroke:0.26px #333;">Raven's High School vs Cory High School</div>
<div class="t " style="left:1258.20px;top:500.86px;font-size:16px;letter-spacing:0.000px;color:#333;font-weight:400;transform:scaleX(0.9937);transform-origin:0.00px 0;-webkit-text-stroke:0.26px #333;">Vars</div>
<div class="a" style="left:258.5px;top:562.0px;width:15.5px;height:15.2px;background:#fff;border:1.3px solid #7a7a7a;border-radius:3px"></div>
<svg width="1920" height="760" style="left:0;top:0"><rect x="299.9" y="560.0999999999999" width="15" height="15.9" rx="1.8" fill="none" stroke="#333" stroke-width="1.8"/><path d="M299.9,565.4 H314.9" stroke="#333" stroke-width="1.6"/><path d="M303.8,558.0 V562.0 M311.0,558.0 V562.0" stroke="#333" stroke-width="1.6"/></svg>
<div class="t " style="left:324.80px;top:556.96px;font-size:16px;letter-spacing:0.000px;color:#333;font-weight:400;transform:scaleX(0.9598);transform-origin:0.00px 0;-webkit-text-stroke:0.26px #333;">3/31/22 TBD</div>
<div class="t " style="left:490.00px;top:556.96px;font-size:16px;letter-spacing:0.000px;color:#333;font-weight:400;transform:scaleX(0.9414);transform-origin:0.00px 0;-webkit-text-stroke:0.26px #333;">Cory High School</div>
<svg width="1920" height="760" style="left:0;top:0"><path d="M682.9,556.8 H689.9 L694.5,561.4 V572.3 H682.9 Z" fill="#f00"/><path d="M690.3,557.4 V561.0 H693.9" fill="none" stroke="#fff" stroke-width="0.9"/></svg>
<div class="t " style="left:698.00px;top:556.96px;font-size:16px;letter-spacing:0.000px;color:#333;font-weight:400;transform:scaleX(0.9201);transform-origin:0.00px 0;-webkit-text-stroke:0.26px #333;">TBD vs Cory High School</div>
<div class="t " style="left:1258.20px;top:556.96px;font-size:16px;letter-spacing:0.000px;color:#333;font-weight:400;transform:scaleX(0.9937);transform-origin:0.00px 0;-webkit-text-stroke:0.26px #333;">Vars</div>
<div class="a" style="left:258.5px;top:618.3000000000001px;width:15.5px;height:15.2px;background:#fff;border:1.3px solid #7a7a7a;border-radius:3px"></div>
<svg width="1920" height="760" style="left:0;top:0"><rect x="299.9" y="616.4" width="15" height="15.9" rx="1.8" fill="none" stroke="#333" stroke-width="1.8"/><path d="M299.9,621.7 H314.9" stroke="#333" stroke-width="1.6"/><path d="M303.8,614.3000000000001 V618.3000000000001 M311.0,614.3000000000001 V618.3000000000001" stroke="#333" stroke-width="1.6"/></svg>
<div class="t " style="left:324.80px;top:613.26px;font-size:16px;letter-spacing:0.000px;color:#333;font-weight:400;transform:scaleX(0.9447);transform-origin:0.00px 0;-webkit-text-stroke:0.26px #333;">4/1/22 7:00 PM</div>
<div class="t " style="left:490.00px;top:613.26px;font-size:16px;letter-spacing:0.000px;color:#333;font-weight:400;transform:scaleX(0.9414);transform-origin:0.00px 0;-webkit-text-stroke:0.26px #333;">Cory High School</div>
<svg width="1920" height="760" style="left:0;top:0"><path d="M682.9,613.1 H689.9 L694.5,617.7 V628.6 H682.9 Z" fill="#f00"/><path d="M690.3,613.7 V617.3000000000001 H693.9" fill="none" stroke="#fff" stroke-width="0.9"/></svg>
<div class="t " style="left:698.00px;top:613.26px;font-size:16px;letter-spacing:0.000px;color:#333;font-weight:400;transform:scaleX(0.9330);transform-origin:0.00px 0;-webkit-text-stroke:0.26px #333;">Test Rogers MS vs Test Rogers Elementary School</div>
<div class="t " style="left:1258.20px;top:613.26px;font-size:16px;letter-spacing:0.000px;color:#333;font-weight:400;transform:scaleX(0.9937);transform-origin:0.00px 0;-webkit-text-stroke:0.26px #333;">Vars</div>
<div class="a" style="left:258.5px;top:675.0px;width:15.5px;height:15.2px;background:#fff;border:1.3px solid #7a7a7a;border-radius:3px"></div>
<svg width="1920" height="760" style="left:0;top:0"><rect x="299.9" y="673.0999999999999" width="15" height="15.9" rx="1.8" fill="none" stroke="#333" stroke-width="1.8"/><path d="M299.9,678.4 H314.9" stroke="#333" stroke-width="1.6"/><path d="M303.8,671.0 V675.0 M311.0,671.0 V675.0" stroke="#333" stroke-width="1.6"/></svg>
<div class="t " style="left:324.80px;top:669.96px;font-size:16px;letter-spacing:0.000px;color:#333;font-weight:400;transform:scaleX(0.9447);transform-origin:0.00px 0;-webkit-text-stroke:0.26px #333;">4/2/22 7:00 PM</div>
<div class="t " style="left:490.00px;top:669.96px;font-size:16px;letter-spacing:0.000px;color:#333;font-weight:400;transform:scaleX(0.9414);transform-origin:0.00px 0;-webkit-text-stroke:0.26px #333;">Cory High School</div>
<svg width="1920" height="760" style="left:0;top:0"><path d="M682.9,669.8 H689.9 L694.5,674.4 V685.3 H682.9 Z" fill="#f00"/><path d="M690.3,670.4 V674.0 H693.9" fill="none" stroke="#fff" stroke-width="0.9"/></svg>
<div class="t " style="left:698.00px;top:669.96px;font-size:16px;letter-spacing:0.000px;color:#333;font-weight:400;transform:scaleX(0.9229);transform-origin:0.00px 0;-webkit-text-stroke:0.26px #333;">Test Rogers MS vs Cory High School</div>
<div class="t " style="left:1258.20px;top:669.96px;font-size:16px;letter-spacing:0.000px;color:#333;font-weight:400;transform:scaleX(0.9937);transform-origin:0.00px 0;-webkit-text-stroke:0.26px #333;">Vars</div>
<div class="a" style="left:256.3px;top:222.2px;width:15.5px;height:15px;background:#fff;border:1.3px solid #7a7a7a;border-radius:3px"></div>
<div class="t " style="left:308.75px;top:217.13px;font-size:15.2px;letter-spacing:0.000px;color:#333;font-weight:400;transform:scaleX(0.9424);transform-origin:0.00px 0;-webkit-text-stroke:0.35px #333">Date</div>
<div class="t " style="left:500.50px;top:217.13px;font-size:15.2px;letter-spacing:0.000px;color:#333;font-weight:400;transform:scaleX(0.9824);transform-origin:0.00px 0;-webkit-text-stroke:0.35px #333">Host</div>
<div class="t " style="left:692.50px;top:217.13px;font-size:15.2px;letter-spacing:0.000px;color:#333;font-weight:400;transform:scaleX(0.9704);transform-origin:0.00px 0;-webkit-text-stroke:0.35px #333">Name</div>
<div class="t " style="left:1268.70px;top:217.13px;font-size:15.2px;letter-spacing:0.000px;color:#333;font-weight:400;transform:scaleX(1.0215);transform-origin:0.00px 0;-webkit-text-stroke:0.35px #333">Sp</div>
<div class="a" style="left:1287px;top:200px;width:13px;height:555px;background:#fff"></div>
<div class="a" style="left:1287px;top:199px;width:13px;height:1px;background:#e3e3e3"></div>
<div class="t " style="left:1353.90px;top:-4.09px;font-size:16px;letter-spacing:0.000px;color:#337ab7;font-weight:400;transform:scaleX(0.9279);transform-origin:0.00px 0;-webkit-text-stroke:0.2px #337ab7">Add Assigner</div>
<svg width="1920" height="760" style="left:0;top:0"><path d="M1329.1,3.4 H1340.4 M1334.75,-2.250000000000091 V9.050000000000091" stroke="#337ab7" stroke-width="1.6"/></svg>
<div class="t " style="left:1312.20px;top:47.23px;font-size:17.8px;letter-spacing:0.000px;color:#333;font-weight:400;transform:scaleX(0.9911);transform-origin:0.00px 0;-webkit-text-stroke:0.28px #333;">Officials and Workers</div>
<div class="a" style="left:1311.8px;top:104.6px;width:283.7px;height:39px;background:#fff;border:1px solid #d6d6d6;border-radius:5px"></div>
<div class="a" style="left:1545px;top:105px;width:1px;height:38px;background:#ddd"></div>
<div class="a" style="left:1311.8px;top:104.6px;width:116.2px;height:39px;background:#eaf2fb;border:1.5px solid #337ab7;border-radius:5px 0 0 5px"></div>
<svg width="1920" height="760" style="left:0;top:0">
<g fill="#555">
<rect x="1328.6" y="114.8" width="1.7" height="7" rx="0.8"/><rect x="1343.8" y="114.8" width="1.7" height="7" rx="0.8"/>
<rect x="1331.3" y="113.6" width="1.8" height="15.2"/><rect x="1334.4" y="113.6" width="1.8" height="15.2"/><rect x="1337.6" y="113.6" width="1.8" height="15.2"/><rect x="1340.8" y="113.6" width="1.8" height="15.2"/>
</g>
<g fill="#bbb"><rect x="1333.1" y="114" width="1.3" height="14.5"/><rect x="1336.2" y="114" width="1.4" height="14.5"/><rect x="1339.4" y="114" width="1.4" height="14.5"/></g>
<path d="M1445.9,114.2 L1447.8,114.2 L1447.8,122.7 L1444.8,122.7 L1445.6,119.5 Z M1448.7,113.4 L1449.9,113.4 L1452.1,119.2 L1452.1,122.7 L1448.7,122.7 Z M1458.9,114.2 L1457.0,114.2 L1457.0,122.7 L1460.0,122.7 L1459.2,119.5 Z M1456.1,113.4 L1454.9,113.4 L1452.7,119.2 L1452.7,122.7 L1456.1,122.7 Z" fill="#575757"/><rect x="1444.8" y="124.5" width="7.3" height="1.5" fill="#575757"/><rect x="1452.7" y="124.5" width="7.3" height="1.5" fill="#575757"/><rect x="1444.8" y="127.1" width="7.3" height="2.2" fill="#575757"/><rect x="1452.7" y="127.1" width="7.3" height="2.2" fill="#575757"/>
</svg>
<div class="t " style="left:1357.50px;top:113.21px;font-size:17px;letter-spacing:0.000px;color:#337ab7;font-weight:400;transform:scaleX(0.8902);transform-origin:0.00px 0;-webkit-text-stroke:0.27px #337ab7;">Officials</div>
<div class="t " style="left:1472.00px;top:113.21px;font-size:17px;letter-spacing:0.000px;color:#666;font-weight:400;transform:scaleX(0.9048);transform-origin:0.00px 0;-webkit-text-stroke:0.27px #666;">Workers</div>
<div class="t " style="left:1561.50px;top:113.21px;font-size:17px;letter-spacing:0.000px;color:#666;font-weight:400;transform:scaleX(0.9418);transform-origin:0.00px 0;-webkit-text-stroke:0.27px #666;">All</div>
<div class="t " style="left:1619.70px;top:81.99px;font-size:13.6px;letter-spacing:0.000px;color:#333;font-weight:400;transform:scaleX(0.9393);transform-origin:0.00px 0;-webkit-text-stroke:0.3px #333">Responsible Party</div>
<div class="a" style="left:1619.7px;top:105.8px;width:255.29999999999995px;height:37.500000000000014px;background:#fff;border:1px solid #ccc;border-radius:4px;"></div>
<div class="t " style="left:1634.00px;top:114.86px;font-size:16px;letter-spacing:0.000px;color:#555;font-weight:400;transform:scaleX(0.9157);transform-origin:0.00px 0;-webkit-text-stroke:0.26px #555;">Home</div>
<div class="t " style="left:1312.20px;top:160.49px;font-size:15.6px;letter-spacing:0.000px;color:#333;font-weight:400;transform:scaleX(0.9892);transform-origin:0.00px 0;-webkit-text-stroke:0.35px #333">Position</div>
<div class="t " style="left:1496.90px;top:160.49px;font-size:15.6px;letter-spacing:0.000px;color:#333;font-weight:400;transform:scaleX(1.0084);transform-origin:0.00px 0;-webkit-text-stroke:0.35px #333">Official</div>
<div class="t " style="left:1714.50px;top:160.39px;font-size:15.6px;letter-spacing:0.000px;color:#333;font-weight:400;transform:scaleX(0.9661);transform-origin:0.00px 0;-webkit-text-stroke:0.35px #333">Status</div>
<div class="t " style="left:1312.20px;top:202.63px;font-size:15.8px;letter-spacing:0.000px;color:#333;font-weight:400;transform:scaleX(0.9448);transform-origin:0.00px 0;-webkit-text-stroke:0.25px #333;">Referee</div>
<div class="t " style="left:1553.10px;top:202.63px;font-size:15.8px;letter-spacing:0.000px;color:#333;font-weight:400;transform:scaleX(0.9496);transform-origin:0.00px 0;-webkit-text-stroke:0.25px #333;">Unassigned</div>
<div class="a" style="left:1714px;top:197.0px;width:96.2px;height:29.8px;background:#d9261c;border-radius:9.5px"></div>
<div class="t " style="left:1728.60px;top:203.39px;font-size:13.6px;letter-spacing:0.000px;color:#fff;font-weight:700;transform:scaleX(0.8638);transform-origin:0.00px 0;">Unassigned</div>
<div class="t " style="left:1312.20px;top:253.83px;font-size:15.8px;letter-spacing:0.000px;color:#333;font-weight:400;transform:scaleX(0.9587);transform-origin:0.00px 0;-webkit-text-stroke:0.25px #333;">Umpire</div>
<div class="t " style="left:1553.10px;top:253.83px;font-size:15.8px;letter-spacing:0.000px;color:#333;font-weight:400;transform:scaleX(0.9496);transform-origin:0.00px 0;-webkit-text-stroke:0.25px #333;">Unassigned</div>
<div class="a" style="left:1714px;top:248.2px;width:96.2px;height:29.8px;background:#d9261c;border-radius:9.5px"></div>
<div class="t " style="left:1728.60px;top:254.59px;font-size:13.6px;letter-spacing:0.000px;color:#fff;font-weight:700;transform:scaleX(0.8638);transform-origin:0.00px 0;">Unassigned</div>
<div class="t " style="left:1312.20px;top:305.03px;font-size:15.8px;letter-spacing:0.000px;color:#333;font-weight:400;transform:scaleX(0.9431);transform-origin:0.00px 0;-webkit-text-stroke:0.25px #333;">Head Linesman</div>
<div class="t " style="left:1553.10px;top:305.03px;font-size:15.8px;letter-spacing:0.000px;color:#333;font-weight:400;transform:scaleX(0.9496);transform-origin:0.00px 0;-webkit-text-stroke:0.25px #333;">Unassigned</div>
<div class="a" style="left:1714px;top:299.4px;width:96.2px;height:29.8px;background:#d9261c;border-radius:9.5px"></div>
<div class="t " style="left:1728.60px;top:305.79px;font-size:13.6px;letter-spacing:0.000px;color:#fff;font-weight:700;transform:scaleX(0.8638);transform-origin:0.00px 0;">Unassigned</div>
<div class="t " style="left:1312.20px;top:356.23px;font-size:15.8px;letter-spacing:0.000px;color:#333;font-weight:400;transform:scaleX(0.9483);transform-origin:0.00px 0;-webkit-text-stroke:0.25px #333;">Line Judge</div>
<div class="t " style="left:1553.10px;top:356.23px;font-size:15.8px;letter-spacing:0.000px;color:#333;font-weight:400;transform:scaleX(0.9496);transform-origin:0.00px 0;-webkit-text-stroke:0.25px #333;">Unassigned</div>
<div class="a" style="left:1714px;top:350.6px;width:96.2px;height:29.8px;background:#d9261c;border-radius:9.5px"></div>
<div class="t " style="left:1728.60px;top:356.99px;font-size:13.6px;letter-spacing:0.000px;color:#fff;font-weight:700;transform:scaleX(0.8638);transform-origin:0.00px 0;">Unassigned</div>
<div class="t " style="left:1312.20px;top:407.43px;font-size:15.8px;letter-spacing:0.000px;color:#333;font-weight:400;transform:scaleX(0.9274);transform-origin:0.00px 0;-webkit-text-stroke:0.25px #333;">Back Judge</div>
<div class="t " style="left:1553.10px;top:407.43px;font-size:15.8px;letter-spacing:0.000px;color:#333;font-weight:400;transform:scaleX(0.9496);transform-origin:0.00px 0;-webkit-text-stroke:0.25px #333;">Unassigned</div>
<div class="a" style="left:1714px;top:401.8px;width:96.2px;height:29.8px;background:#d9261c;border-radius:9.5px"></div>
<div class="t " style="left:1728.60px;top:408.19px;font-size:13.6px;letter-spacing:0.000px;color:#fff;font-weight:700;transform:scaleX(0.8638);transform-origin:0.00px 0;">Unassigned</div>
<svg width="1920" height="760" style="left:0;top:0"><circle cx="1516.6" cy="203.3" r="6.4" fill="none" stroke="#7b7b7b" stroke-width="3.3"/><path d="M1503.2,226.9 V223.3 Q1503.2,217.0 1509.5,217.0 H1524 Q1530.3,217.0 1530.3,223.3 V226.9" fill="none" stroke="#7b7b7b" stroke-width="3.4" stroke-linecap="round"/><path d="M1819.2,206.0 H1837" stroke="#818181" stroke-width="1.9" stroke-linecap="round"/><path d="M1824.3,206.0 V204.3 Q1824.3,202.70000000000002 1826,202.70000000000002 H1830.7 Q1832.4,202.70000000000002 1832.4,204.3 V206.0" fill="none" stroke="#818181" stroke-width="1.9"/><path d="M1821.2,206.0 V219.3 Q1821.2,221.60000000000002 1823.5,221.60000000000002 H1833 Q1835.3,221.60000000000002 1835.3,219.3 V206.0" fill="none" stroke="#818181" stroke-width="1.9"/><path d="M1826,210.4 V217.20000000000002 M1830,210.4 V217.20000000000002" stroke="#818181" stroke-width="1.9"/><circle cx="1516.6" cy="254.5" r="6.4" fill="none" stroke="#7b7b7b" stroke-width="3.3"/><path d="M1503.2,278.1 V274.5 Q1503.2,268.2 1509.5,268.2 H1524 Q1530.3,268.2 1530.3,274.5 V278.1" fill="none" stroke="#7b7b7b" stroke-width="3.4" stroke-linecap="round"/><path d="M1819.2,257.2 H1837" stroke="#818181" stroke-width="1.9" stroke-linecap="round"/><path d="M1824.3,257.2 V255.5 Q1824.3,253.9 1826,253.9 H1830.7 Q1832.4,253.9 1832.4,255.5 V257.2" fill="none" stroke="#818181" stroke-width="1.9"/><path d="M1821.2,257.2 V270.5 Q1821.2,272.8 1823.5,272.8 H1833 Q1835.3,272.8 1835.3,270.5 V257.2" fill="none" stroke="#818181" stroke-width="1.9"/><path d="M1826,261.6 V268.4 M1830,261.6 V268.4" stroke="#818181" stroke-width="1.9"/><circle cx="1516.6" cy="305.70000000000005" r="6.4" fill="none" stroke="#7b7b7b" stroke-width="3.3"/><path d="M1503.2,329.30000000000007 V325.70000000000005 Q1503.2,319.40000000000003 1509.5,319.40000000000003 H1524 Q1530.3,319.40000000000003 1530.3,325.70000000000005 V329.30000000000007" fill="none" stroke="#7b7b7b" stroke-width="3.4" stroke-linecap="round"/><path d="M1819.2,308.40000000000003 H1837" stroke="#818181" stroke-width="1.9" stroke-linecap="round"/><path d="M1824.3,308.40000000000003 V306.70000000000005 Q1824.3,305.1 1826,305.1 H1830.7 Q1832.4,305.1 1832.4,306.70000000000005 V308.40000000000003" fill="none" stroke="#818181" stroke-width="1.9"/><path d="M1821.2,308.40000000000003 V321.70000000000005 Q1821.2,324.00000000000006 1823.5,324.00000000000006 H1833 Q1835.3,324.00000000000006 1835.3,321.70000000000005 V308.40000000000003" fill="none" stroke="#818181" stroke-width="1.9"/><path d="M1826,312.80000000000007 V319.6 M1830,312.80000000000007 V319.6" stroke="#818181" stroke-width="1.9"/><circle cx="1516.6" cy="356.90000000000003" r="6.4" fill="none" stroke="#7b7b7b" stroke-width="3.3"/><path d="M1503.2,380.50000000000006 V376.90000000000003 Q1503.2,370.6 1509.5,370.6 H1524 Q1530.3,370.6 1530.3,376.90000000000003 V380.50000000000006" fill="none" stroke="#7b7b7b" stroke-width="3.4" stroke-linecap="round"/><path d="M1819.2,359.6 H1837" stroke="#818181" stroke-width="1.9" stroke-linecap="round"/><path d="M1824.3,359.6 V357.90000000000003 Q1824.3,356.3 1826,356.3 H1830.7 Q1832.4,356.3 1832.4,357.90000000000003 V359.6" fill="none" stroke="#818181" stroke-width="1.9"/><path d="M1821.2,359.6 V372.90000000000003 Q1821.2,375.20000000000005 1823.5,375.20000000000005 H1833 Q1835.3,375.20000000000005 1835.3,372.90000000000003 V359.6" fill="none" stroke="#818181" stroke-width="1.9"/><path d="M1826,364.00000000000006 V370.8 M1830,364.00000000000006 V370.8" stroke="#818181" stroke-width="1.9"/><circle cx="1516.6" cy="408.1" r="6.4" fill="none" stroke="#7b7b7b" stroke-width="3.3"/><path d="M1503.2,431.70000000000005 V428.1 Q1503.2,421.8 1509.5,421.8 H1524 Q1530.3,421.8 1530.3,428.1 V431.70000000000005" fill="none" stroke="#7b7b7b" stroke-width="3.4" stroke-linecap="round"/><path d="M1819.2,410.8 H1837" stroke="#818181" stroke-width="1.9" stroke-linecap="round"/><path d="M1824.3,410.8 V409.1 Q1824.3,407.5 1826,407.5 H1830.7 Q1832.4,407.5 1832.4,409.1 V410.8" fill="none" stroke="#818181" stroke-width="1.9"/><path d="M1821.2,410.8 V424.1 Q1821.2,426.40000000000003 1823.5,426.40000000000003 H1833 Q1835.3,426.40000000000003 1835.3,424.1 V410.8" fill="none" stroke="#818181" stroke-width="1.9"/><path d="M1826,415.20000000000005 V422.0 M1830,415.20000000000005 V422.0" stroke="#818181" stroke-width="1.9"/></svg>
<svg width="1920" height="760" style="left:0;top:0"><path d="M1328.4,480.2 H1340.7 M1334.5500000000002,474.05 V486.34999999999997" stroke="#337ab7" stroke-width="1.6"/></svg>
<div class="t " style="left:1354.00px;top:472.16px;font-size:16px;letter-spacing:0.000px;color:#337ab7;font-weight:400;transform:scaleX(0.9421);transform-origin:0.00px 0;-webkit-text-stroke:0.25px #337ab7">Add Position</div>
<div class="a" style="left:1315.4px;top:522px;width:596px;height:3px;background:#dcdcdc"></div>
<div class="t " style="left:1315.40px;top:538.08px;font-size:22px;letter-spacing:0.000px;color:#333;font-weight:400;transform:scaleX(1.0247);transform-origin:0.00px 0;-webkit-text-stroke:0.35px #333;">Search Officials</div>
<div class="a" style="left:1500.1px;top:539.5px;width:15.4px;height:15.4px;background:#0d6efd;border-radius:3px"></div>
<svg width="1920" height="760" style="left:0;top:0"><path d="M1503.6,547.5 L1506.7,550.5 L1512.3,544" fill="none" stroke="#fff" stroke-width="2.2" stroke-linecap="round" stroke-linejoin="round"/></svg>
<div class="t " style="left:1523.10px;top:539.73px;font-size:17.8px;letter-spacing:0.000px;color:#333;font-weight:400;transform:scaleX(0.9823);transform-origin:0.00px 0;-webkit-text-stroke:0.28px #333;">Only My Associations</div>
<div class="a" style="left:1700.5px;top:539.6px;width:14.5px;height:14.5px;background:#fff;border:1.3px solid #767676;border-radius:3px"></div>
<div class="t " style="left:1721.80px;top:539.73px;font-size:17.8px;letter-spacing:0.000px;color:#333;font-weight:400;transform:scaleX(0.9917);transform-origin:0.00px 0;-webkit-text-stroke:0.28px #333;">Show Blocked Officials</div>
<div class="a" style="left:1315.4px;top:577px;width:593.0px;height:44px;background:#fff;border:1px solid #ccc;border-radius:5px;"></div>
<div class="a" style="left:1323.2px;top:585px;width:140.70000000000005px;height:28.399999999999977px;background:#337ab7;border-radius:5px"></div>
<div class="t " style="left:1329.60px;top:589.36px;font-size:16px;letter-spacing:0.000px;color:#fff;font-weight:400;transform:scaleX(0.9712);transform-origin:0.00px 0;-webkit-text-stroke:0.26px #fff;">Sport: Football</div>
<div class="a" style="left:1436px;top:589.7px;width:1px;height:19px;background:#fff"></div>
<svg width="1920" height="760" style="left:0;top:0"><path d="M1445.9,593.7500000000001 L1455.0,602.85 M1455.0,593.7500000000001 L1445.9,602.85" stroke="#fff" stroke-width="1.2"/></svg>
<div class="a" style="left:1467.2px;top:585px;width:99.79999999999995px;height:28.399999999999977px;background:#337ab7;border-radius:5px"></div>
<div class="t " style="left:1473.60px;top:589.36px;font-size:16px;letter-spacing:0.000px;color:#fff;font-weight:400;transform:scaleX(0.9199);transform-origin:0.00px 0;-webkit-text-stroke:0.26px #fff;">State: AL</div>
<div class="a" style="left:1540px;top:589.7px;width:1px;height:19px;background:#fff"></div>
<svg width="1920" height="760" style="left:0;top:0"><path d="M1548.9,593.7500000000001 L1558.0,602.85 M1558.0,593.7500000000001 L1548.9,602.85" stroke="#fff" stroke-width="1.2"/></svg>
<svg width="1920" height="760" style="left:0;top:0"><path d="M1891,596.5 L1895.5,602 L1900,596.5" fill="none" stroke="#333" stroke-width="1.2" stroke-linecap="round" stroke-linejoin="round"/></svg>
<div class="a" style="left:1315.2px;top:632px;width:597px;height:123px;background:#fff;border:1px solid #ddd;border-radius:4px"></div>
<svg width="1920" height="760" style="left:0;top:0">
<circle cx="1364.3" cy="680" r="6.4" fill="none" stroke="#7b7b7b" stroke-width="3.3"/>
<path d="M1350.7,709.8 V706 Q1350.7,699.7 1357,699.7 H1371.6 Q1377.9,699.7 1377.9,706 V709.8" fill="none" stroke="#7b7b7b" stroke-width="3.4" stroke-linecap="round"/>
</svg>
<div class="t " style="left:1423.30px;top:655.88px;font-size:16.8px;letter-spacing:0.000px;color:#337ab7;font-weight:400;transform:scaleX(0.8986);transform-origin:0.00px 0;-webkit-text-stroke:0.27px #337ab7;">Linda Beasley</div>
<div class="a" style="left:1423.3px;top:670.4px;width:94.8px;height:1.1px;background:#337ab7"></div>
<div class="t " style="left:1423.30px;top:680.76px;font-size:12.8px;letter-spacing:0.000px;color:#222;font-weight:400;transform:scaleX(0.9414);transform-origin:0.00px 0;-webkit-text-stroke:0.20px #222;">DF# 21-3754-2471</div>
<div class="t " style="left:1423.30px;top:700.40px;font-size:12.4px;letter-spacing:0.000px;color:#222;font-weight:400;transform:scaleX(1.0125);transform-origin:0.00px 0;-webkit-text-stroke:0.20px #222;">Approx. 4444 miles from event</div>
<div class="t " style="left:1423.30px;top:718.00px;font-size:13px;letter-spacing:0.000px;color:#222;font-weight:400;transform:scaleX(0.9231);transform-origin:0.00px 0;-webkit-text-stroke:0.21px #222;">Open in</div>
<div class="t " style="left:1469.30px;top:718.00px;font-size:13px;letter-spacing:0.000px;color:#337ab7;font-weight:400;transform:scaleX(0.9366);transform-origin:0.00px 0;-webkit-text-stroke:0.21px #337ab7;">Google Maps</div>
<div class="a" style="left:1615.3px;top:673.3px;width:159.4000000000001px;height:43.0px;background:#fff;border:1px solid #ccc;border-radius:5px;"></div>
<div class="t " style="left:1621.70px;top:685.01px;font-size:17px;letter-spacing:0.000px;color:#999;font-weight:400;transform:scaleX(0.9022);transform-origin:0.00px 0;-webkit-text-stroke:0.27px #999;">Select position...</div>
<svg width="1920" height="760" style="left:0;top:0"><path d="M1756,692.5 L1760.9,698 L1765.8,692.5" fill="none" stroke="#333" stroke-width="1.2" stroke-linecap="round" stroke-linejoin="round"/></svg>
<div class="a" style="left:1785px;top:675.8px;width:96.3px;height:38.9px;background:#7eaad5;border-radius:5px"></div>
<div class="t " style="left:1810.30px;top:685.86px;font-size:16px;letter-spacing:0.000px;color:#fff;font-weight:700;transform:scaleX(0.8537);transform-origin:0.00px 0;">Assign</div>
<svg width="1920" height="760" style="left:0;top:0">
<ellipse cx="1469.8" cy="665.4" rx="64" ry="29.3" fill="none" stroke="#ffc000" stroke-width="3.6"/>
<path d="M715,665.6 H1366" stroke="#ffc000" stroke-width="30.5" stroke-linecap="round"/>
<path d="M1306.5,620.6 L1366,665.6 L1306.5,710.4" fill="none" stroke="#ffc000" stroke-width="30" stroke-linecap="round" stroke-linejoin="round"/>
</svg>
<div class="a" style="left:0;top:0;width:1920px;height:3px;background:#686b6f"></div>
<div class="a" style="left:0;top:0;width:3.5px;height:759px;background:#686b6f"></div>
<div class="a" style="left:1916px;top:0;width:4px;height:759px;background:#686b6f"></div>
<div class="a" style="left:0;top:755px;width:1920px;height:4px;background:#686b6f"></div>
</body></html>
